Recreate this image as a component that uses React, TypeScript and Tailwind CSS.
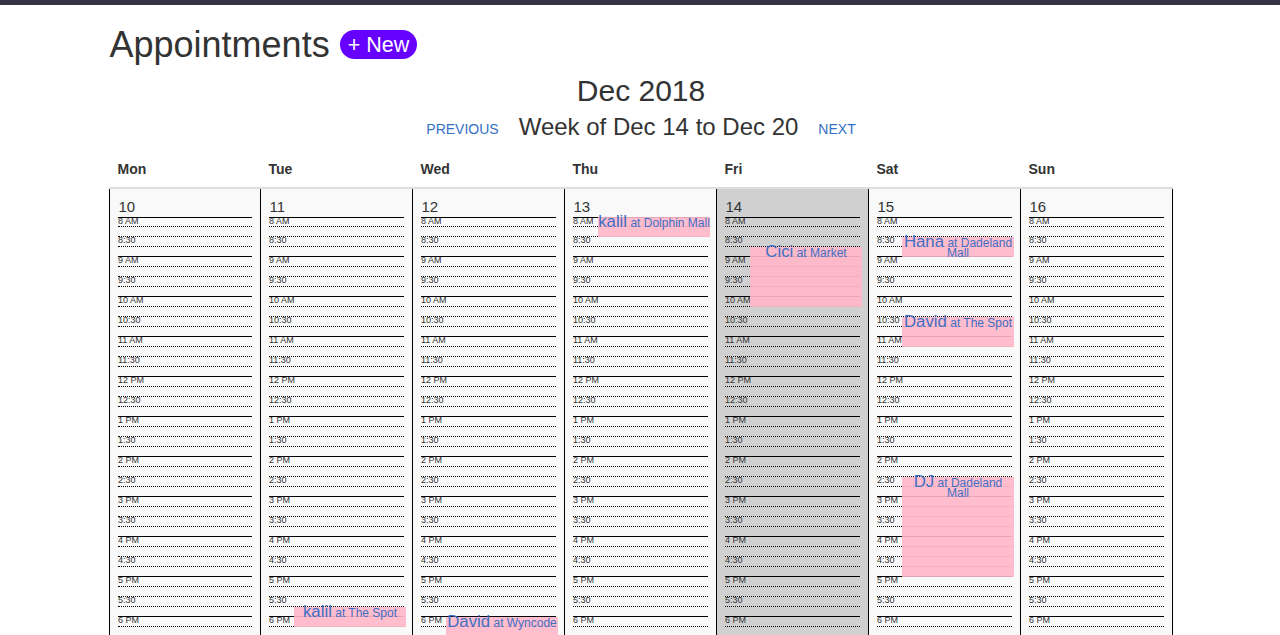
const days = [
  { name: "Mon", date: 10 },
  { name: "Tue", date: 11 },
  { name: "Wed", date: 12 },
  { name: "Thu", date: 13 },
  { name: "Fri", date: 14, today: true },
  { name: "Sat", date: 15 },
  { name: "Sun", date: 16 },
];

const slots = [
  "8 AM", "8:30", "9 AM", "9:30", "10 AM", "10:30", "11 AM", "11:30", "12 PM", "12:30",
  "1 PM", "1:30", "2 PM", "2:30", "3 PM", "3:30", "4 PM", "4:30", "5 PM", "5:30", "6 PM",
];

// top and height are in pixels from the top of the first slot
const appointments: Record<number, { name: string; place: string; top: number; height: number }[]> = {
  11: [{ name: "kalil", place: "at The Spot", top: 390, height: 20 }],
  12: [{ name: "David", place: "at Wyncode", top: 400, height: 20 }],
  13: [{ name: "kalil", place: "at Dolphin Mall", top: 0, height: 20 }],
  14: [{ name: "Cici", place: "at Market", top: 30, height: 60 }],
  15: [
    { name: "Hana", place: "at Dadeland Mall", top: 20, height: 20 },
    { name: "David", place: "at The Spot", top: 100, height: 30 },
    { name: "DJ", place: "at Dadeland Mall", top: 260, height: 100 },
  ],
};

const Slot = ({ label, index }: { label: string; index: number }) => (
  <div
    className={`border-t border-black ${index === 0 ? "h-[19px]" : "h-5"} ${
      index % 2 === 0 ? "border-solid" : "border-dotted"
    }`}
  >
    <div
      className={`box-content border-b border-dotted border-black text-[9px] leading-[7px] text-[#333] ${
        index === 0 ? "h-[8px]" : "h-[9px]"
      }`}
    >
      {label}
    </div>
  </div>
);

const DayColumn = ({ day, first }: { day: (typeof days)[number]; first: boolean }) => (
  <div
    className={`relative border-l border-black px-2 pt-[9px] ${first ? "w-[151px]" : "w-[152px]"} ${
      day.today ? "bg-[#d0d0d0]" : "bg-[#f9f9f9]"
    }`}
  >
    <div className="h-[19px] pl-[0.5px] text-[15px] leading-[17px] text-[#333]">{day.date}</div>
    <div className="relative">
      {slots.map((label, i) => (
        <Slot key={label} label={label} index={i} />
      ))}
      {(appointments[day.date] ?? []).map((appt) => (
        <div
          key={appt.name + appt.top}
          className="absolute left-[25px] w-[112px] bg-[#ffb6c8]/90 text-center text-[12px] leading-[10px] text-[#3f6fc4]"
          style={{ top: appt.top, height: appt.height }}
        >
          <span className="text-[16.8px]">{appt.name}</span> {appt.place}
        </div>
      ))}
    </div>
  </div>
);

export default function App() {
  return (
    <div className="h-[635px] overflow-hidden bg-white font-['Liberation_Sans',Arial,sans-serif] text-[#333]">
      <div className="h-[5px] bg-[#343341]" />
      <div className="ml-[109px] w-[1064px]">
        <div className="mt-5 flex h-10 items-center gap-[10px] pl-[0.5px]">
          <h1 className="text-[36px] leading-[40px]">Appointments</h1>
          <a className="h-[29px] -translate-y-px rounded-[15px] bg-[#6600ff] px-2 text-[21.5px] leading-[31px] text-white">+ New</a>
        </div>
        <h2 className="mt-[6px] text-center text-[30px] leading-[40px]">Dec 2018</h2>
        <div className="mt-px flex h-[30px] items-center justify-center gap-5">
          <a className="mt-1 text-[14px] leading-5 text-[#3570c4]">PREVIOUS</a>
          <span className="text-[24px] leading-[30px]">Week of Dec 14 to Dec 20</span>
          <a className="mt-1 text-[14px] leading-5 text-[#3570c4]">NEXT</a>
        </div>
        <div className="mt-[12px] box-content flex h-[33px] border-b-2 border-[#ddd]">
          {days.map((d, i) => (
            <div key={d.name} className={`${i === 0 ? "w-[151px]" : "w-[152px]"} pl-[8.5px] pt-[5px] text-[14px] leading-5 font-bold`}>
              {d.name}
            </div>
          ))}
        </div>
        <div className="flex border-r border-black">
          {days.map((d, i) => (
            <DayColumn key={d.name} day={d} first={i === 0} />
          ))}
        </div>
      </div>
    </div>
  );
}
